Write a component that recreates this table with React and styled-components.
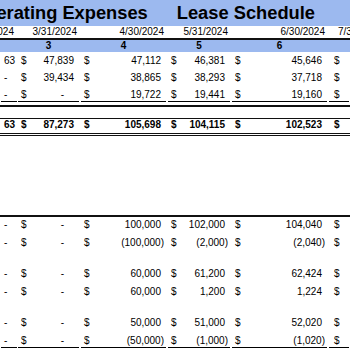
import styled, { createGlobalStyle } from "styled-components";

const GlobalStyle = createGlobalStyle`
  html, body {
    margin: 0;
    padding: 0;
    background: #ffffff;
  }
  body {
    font-family: "Liberation Sans", Arial, sans-serif;
    color: #000;
  }
`;

const COLS = "17px 63px 87px 64px 97px 1fr";

const TOP_ROWS = [
  { a: "63", vals: [47839, 47112, 46381, 45646] },
  { a: "-", vals: [39434, 38865, 38293, 37718] },
  { a: "-", vals: [0, 19722, 19441, 19160], underline: true },
];

const TOTAL = { a: "63", vals: [87273, 105698, 104115, 102523] };

const LOWER_ROWS = [
  { vals: [0, 100000, 102000, 104040] },
  { vals: [0, -100000, -2000, -2040] },
  { blank: true },
  { vals: [0, 60000, 61200, 62424] },
  { vals: [0, 60000, 1200, 1224] },
  { blank: true },
  { vals: [0, 50000, 51000, 52020] },
  { vals: [0, -50000, -1000, -1020], underline: true },
];

const DATES = ["2/29/2024", "3/31/2024", "4/30/2024", "5/31/2024", "6/30/2024", "7/31/2024"];
const PERIODS = ["", "3", "4", "5", "6", ""];

const fmt = (n) => {
  if (n === 0) return "-";
  const s = Math.abs(n).toLocaleString("en-US");
  return n < 0 ? `(${s})` : s;
};

const Sheet = styled.div`
  width: 350px;
  height: 350px;
  overflow: hidden;
  font-size: 10px;
  line-height: 1;
`;

const TitleBar = styled.div`
  height: 26px;
  background: #9cb9ef;
  display: flex;
  align-items: center;
  white-space: nowrap;
`;

const Title = styled.div`
  font-size: 18.3px;
  font-weight: 700;
  margin-left: ${(p) => p.$offset}px;
  padding-top: 1px;
`;

const Row = styled.div`
  display: grid;
  grid-template-columns: ${COLS};
  height: ${(p) => p.$h}px;
  align-items: center;
  background: ${(p) => (p.$blue ? "#9cb9ef" : "transparent")};
  border-top: ${(p) => p.$top || "none"};
  border-bottom: ${(p) => p.$bottom || "none"};
  font-weight: ${(p) => (p.$bold ? 700 : 400)};
  white-space: nowrap;
`;

const DateCell = styled.div`
  display: flex;
  justify-content: flex-end;
  padding-right: 3px;
  min-width: 0;
`;

const LastDate = styled.div`
  padding-left: 10px;
  overflow: hidden;
`;

const IndexCell = styled.div`
  text-align: center;
`;

const Cell = styled.div`
  display: flex;
  height: 100%;
  align-items: center;
  padding: 0 1px;
  overflow: hidden;
`;

const Inner = styled.div`
  flex: 1;
  display: flex;
  justify-content: ${(p) => (p.$end ? "flex-end" : "space-between")};
  align-items: flex-end;
  padding: 0 1px 1px 3px;
  border-bottom: ${(p) => (p.$underline ? "1px solid #000" : "1px solid transparent")};
`;

const Amount = styled.span`
  padding-right: ${(p) => (p.$dash ? 14 : p.$neg ? 1 : 4)}px;
`;

const Dollar = styled.span`
  padding-left: ${(p) => p.$pad || 0}px;
`;

const Spacer = styled.div`
  height: ${(p) => p.$h}px;
`;

const Money = ({ value, underline }) => (
  <Cell>
    <Inner $underline={underline}>
      <Dollar>$</Dollar>
      <Amount $neg={value < 0} $dash={value === 0}>
        {fmt(value)}
      </Amount>
    </Inner>
  </Cell>
);

const FirstCol = ({ text, underline }) => (
  <Cell>
    <Inner $underline={underline} $end>
      <Amount $dash={text === "-"}>{text}</Amount>
    </Inner>
  </Cell>
);

const TailCol = ({ underline }) => (
  <Cell>
    <Inner $underline={underline}>
      <Dollar $pad={2}>$</Dollar>
    </Inner>
  </Cell>
);

const DataRow = ({ row, h, ...rest }) => (
  <Row $h={h} {...rest}>
    <FirstCol text={row.a ?? "-"} underline={row.underline} />
    {row.vals.map((v, i) => (
      <Money key={i} value={v} underline={row.underline} />
    ))}
    <TailCol underline={row.underline} />
  </Row>
);

export default function App() {
  return (
    <>
      <GlobalStyle />
      <Sheet>
        <TitleBar>
          <Title $offset={-29}>Operating Expenses</Title>
          <Title $offset={29}>Lease Schedule</Title>
        </TitleBar>
        <Row $h={11.5}>
          {DATES.slice(0, 5).map((d) => (
            <DateCell key={d}>{d}</DateCell>
          ))}
          <LastDate>{DATES[5]}</LastDate>
        </Row>
        <Row $h={12} $blue $top="2px solid #111" $bold>
          {PERIODS.map((p, i) => (
            <IndexCell key={i}>{p}</IndexCell>
          ))}
        </Row>
        <Spacer $h={2} />
        {TOP_ROWS.map((r, i) => (
          <DataRow
            key={i}
            row={r}
            h={17}
            $bottom={i === TOP_ROWS.length - 1 ? "2px solid #111" : undefined}
          />
        ))}
        <Spacer $h={11} />
        <DataRow
          row={TOTAL}
          h={14}
          $bold
          $top="1px solid #111"
          $bottom="3px double #111"
        />
        <Spacer $h={79} />
        <Row $h={0} $top="2px solid #111" />
        {LOWER_ROWS.map((r, i) =>
          r.blank ? (
            <Spacer key={i} $h={13} />
          ) : (
            <DataRow
              key={i}
              row={r}
              h={18}
              $bottom={r.underline ? "3px double #111" : undefined}
            />
          )
        )}
      </Sheet>
    </>
  );
}
